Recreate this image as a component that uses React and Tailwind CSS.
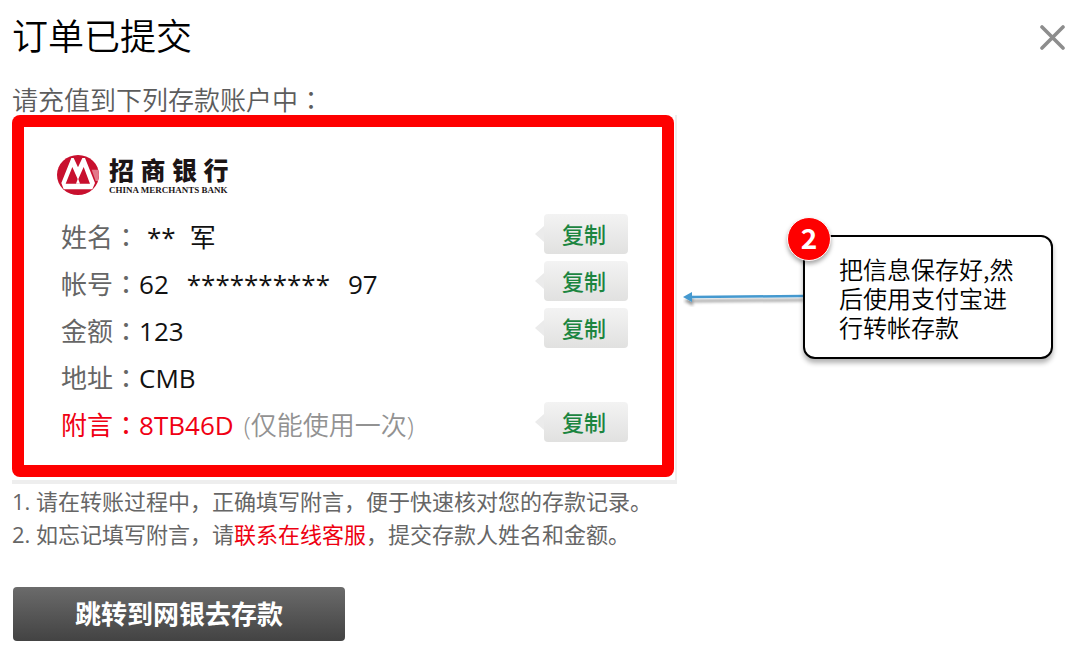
const details = [
  { label: '姓名', copy: true, spaced: true, value: <><Stars count={2} /><span className="ml-3.5">军</span></> },
  { label: '帐号', copy: true, value: <>62<span className="ml-[18px]"><Stars count={10} /></span><span className="ml-[18px]">97</span></> },
  { label: '金额', copy: true, value: '123' },
  { label: '地址', copy: false, value: 'CMB' },
  { label: '附言', copy: true, accent: true, value: '8TB46D', hint: '(仅能使用一次)' },
];

function Stars({ count }) {
  return <span>{'*'.repeat(count)}</span>;
}

function Colon() {
  return <span className="font-['Noto_Sans_CJK_JP',sans-serif]">：</span>;
}

function BankLogo() {
  return (
    <div className="flex items-center gap-2.5">
      <svg viewBox="0 0 126 120" className="h-10 w-[42px]" aria-hidden="true">
        <ellipse cx="63" cy="60" rx="63" ry="60" fill="#c8102e" />
        <path d="M104 44 H124 L126 60 L123 78 H116 Z" fill="#e2798a" />
        <path d="M43 9 L50 9 L63 37 L76 9 L84 9 L114 84 L106 103 L20 103 L13 84 Z" fill="#fff" />
        <path d="M26 86 L46 36 L63 74 L80 36 L99 86 Z" fill="#c8102e" />
        <path d="M57 86 L63 70 L69 86 Z" fill="#fff" />
      </svg>
      <div className="flex flex-col text-[#1c1516]">
        <span className="text-[25px] leading-[30px] font-black">招 商 银 行</span>
        <span className="font-['Liberation_Serif',serif] text-[9px] leading-[10px] font-bold whitespace-nowrap">
          CHINA MERCHANTS BANK
        </span>
      </div>
    </div>
  );
}

function CopyButton({ label }) {
  return (
    <button
      type="button"
      aria-label={`复制${label}`}
      className="relative h-10 w-[84px] shrink-0 rounded bg-linear-to-b from-[#f3f3f3] to-[#e1e1e0] pr-1 text-[22px] leading-8 font-medium text-[#1c8540]"
    >
      <svg viewBox="0 0 9 16" className="absolute top-3 -left-[9px] h-4 w-[9px]" aria-hidden="true">
        <path d="M9 0 L0 8 L9 16 Z" fill="#ebebeb" />
      </svg>
      复制
    </button>
  );
}

function DetailRow({ item }) {
  return (
    <div className="flex h-[47px] items-center justify-between">
      <dl className={`flex items-center pt-1.5 text-[26px] leading-9 whitespace-nowrap ${item.accent ? 'text-[#f00014]' : 'text-[#111]'}`}>
        <dt className={item.accent ? '' : 'text-[#666]'}>{item.label}<Colon /></dt>
        <dd className={item.spaced ? 'ml-2' : ''}>
          {item.value}
          {item.hint && <span className="ml-2.5 font-[350] text-[#929292]">{item.hint}</span>}
        </dd>
      </dl>
      {item.copy && <CopyButton label={item.label} />}
    </div>
  );
}

function Callout() {
  return (
    <aside className="relative w-[250px] shrink-0 rounded-xl border-2 border-black bg-white pt-[17px] pr-7 pb-4 pl-[34px] shadow-[0_4px_5px_rgba(0,0,0,0.3)]">
      <span className="absolute -top-5 -left-[18px] flex h-11 w-11 items-center justify-center rounded-full border border-white bg-[#fe0000] pb-1 font-['Noto_Sans_CJK_SC',sans-serif] text-[28px] leading-9 font-bold text-white shadow-[0_3px_4px_rgba(0,0,0,0.35)]">
        2
      </span>
      <p className="font-['Noto_Sans_CJK_SC',sans-serif] text-[24px] leading-[29px] font-[350] text-black">
        把信息保存好,然<br />后使用支付宝进<br />行转帐存款
      </p>
    </aside>
  );
}

export default function App() {
  return (
    <main className="min-h-screen bg-white px-3 pt-2.5 font-['Open_Sans','Noto_Sans_CJK_SC',sans-serif]">
      <header className="flex items-center justify-between pr-2">
        <h1 className="text-[36px] leading-[54px] font-[350] text-black">订单已提交</h1>
        <button type="button" aria-label="关闭">
          <svg viewBox="0 0 25 25" className="h-[25px] w-[25px]" fill="none" stroke="#8d8d8d" strokeWidth="3.6" strokeLinecap="round">
            <path d="M2 2 L23 23 M23 2 L2 23" />
          </svg>
        </button>
      </header>

      <p className="mt-5 text-[26px] leading-[29px] font-[350] text-[#5c5c5c]">请充值到下列存款账户中<Colon /></p>

      <div className="flex items-center">
        <section className="max-w-[665px] flex-1 border-r-2 border-b-4 border-[#eee] pr-px pb-[3px]">
          <div className="rounded-lg bg-[#fe0000] p-3">
            <div className="bg-white pt-7 pr-[34px] pb-5 pl-[37px]">
              <div className="-ml-1 mb-[15px]">
                <BankLogo />
              </div>
              {details.map((item) => (
                <DetailRow key={item.label} item={item} />
              ))}
            </div>
          </div>
        </section>
        <div className="flex flex-none items-center pb-1.5">
          <svg viewBox="0 0 120 20" className="ml-1.5 h-5 w-[120px]" aria-hidden="true">
            <defs>
              <filter id="arrow-shadow" x="-10%" y="-50%" width="120%" height="250%">
                <feDropShadow dx="1" dy="4" stdDeviation="1.5" floodOpacity="0.4" />
              </filter>
            </defs>
            <g filter="url(#arrow-shadow)" fill="#4499cf">
              <path d="M0 10 L9 5 L9 15 Z" />
              <path d="M8 8.7 L120 7.7 L120 10.3 L8 11.3 Z" />
            </g>
          </svg>
          <Callout />
        </div>
      </div>

      <ol className="mt-px text-[22px] leading-[33px] text-[#666]">
        <li>1. 请在转账过程中，正确填写附言，便于快速核对您的存款记录。</li>
        <li>
          2. 如忘记填写附言，请<a href="#service" className="text-[#ee0011]">联系在线客服</a>，提交存款人姓名和金额。
        </li>
      </ol>

      <button
        type="button"
        className="mt-9 ml-px h-[54px] w-[332px] rounded bg-linear-to-b from-[#6b6b6b] to-[#434343] text-[26px] font-bold text-white"
      >
        跳转到网银去存款
      </button>
    </main>
  );
}
